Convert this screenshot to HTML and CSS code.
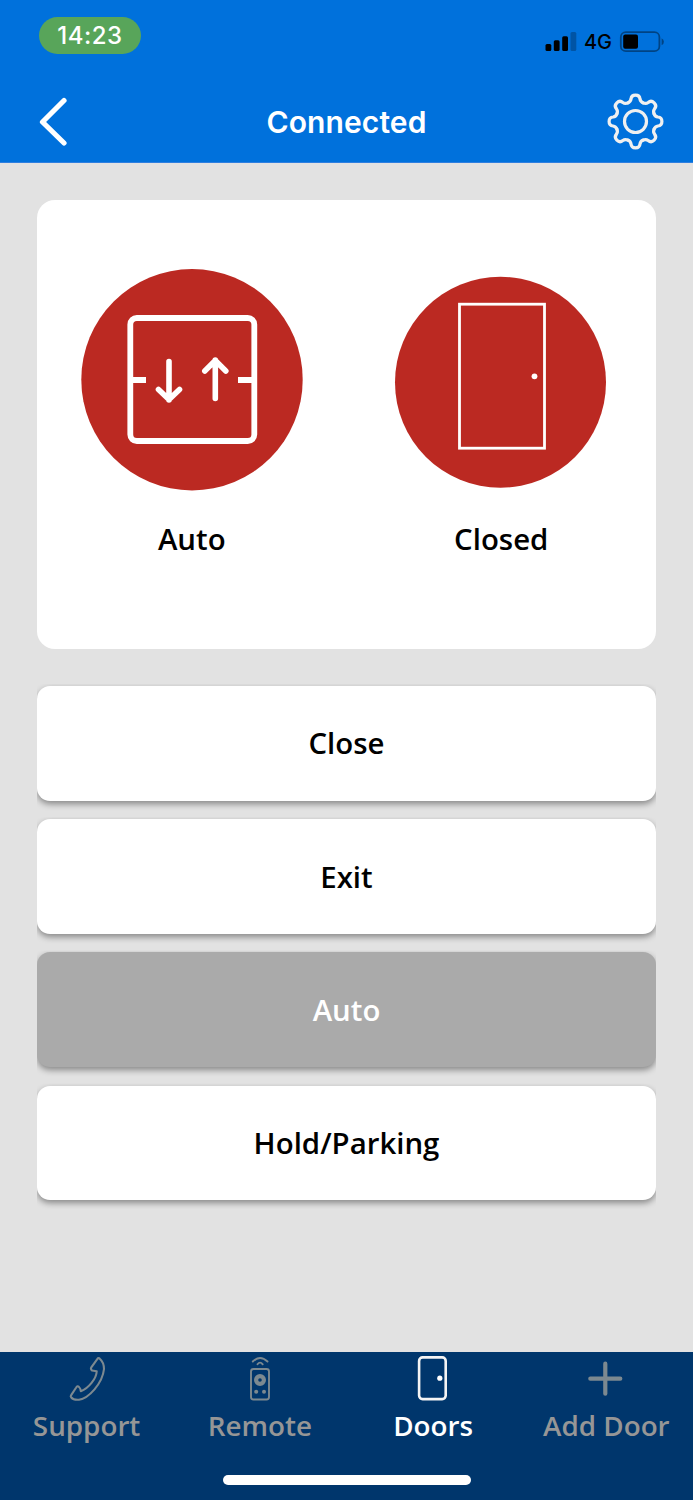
FILE: index.html
```html
<!DOCTYPE html>
<html lang="en">
<head>
  <meta charset="UTF-8" />
  <meta name="viewport" content="width=device-width, initial-scale=1.0" />
  <title>Doors</title>
  <link rel="stylesheet" href="styles.css">
</head>
<body>
  <div class="app">
    <header class="header">
      <div class="status-bar">
        <span class="time">14:23</span>
        <div class="status-icons">
          <svg class="signal" width="32" height="20" viewBox="0 0 32 20">
            <rect x="0.5" y="12" width="5.8" height="7" rx="1.5" />
            <rect x="8.8" y="8.3" width="5.8" height="10.7" rx="1.5" />
            <rect x="17.2" y="4.3" width="5.8" height="14.7" rx="1.5" />
            <rect x="25.5" y="0" width="5.8" height="19" rx="1.5" opacity="0.25" />
          </svg>
          <span class="network">4G</span>
          <svg width="46" height="22" viewBox="-0.6 0 46 22">
            <rect x="1.2" y="1.2" width="38.6" height="19" rx="5" fill="none" stroke="#000" stroke-opacity="0.4" stroke-width="1.8" />
            <rect x="3.6" y="3.5" width="14.8" height="14.3" rx="2" />
            <path d="M42 7.2q2.3 1 2.3 3.5t-2.3 3.5z" opacity="0.4" />
          </svg>
        </div>
      </div>
      <div class="nav-bar">
        <svg class="back" width="30" height="50" viewBox="0 0 30 50">
          <path d="M26 3.5L4.5 25L26 46" fill="none" stroke="#fff" stroke-width="5.2" stroke-linecap="round" stroke-linejoin="round" />
        </svg>
        <h1 class="title">Connected</h1>
        <svg class="gear" width="58" height="58" viewBox="-29.5 -28.5 58 58">
          <defs>
            <path id="tooth" d="M-7.7 -18.6Q-4.9 -19.7 -4.5 -22.4Q-4.2 -26.4 0 -26.4Q4.2 -26.4 4.5 -22.4Q4.9 -19.7 7.7 -18.6" />
          </defs>
          <g fill="none" stroke="#f0f0f0" stroke-width="3.2" stroke-linecap="round">
            <use href="#tooth" />
            <use href="#tooth" transform="rotate(45)" />
            <use href="#tooth" transform="rotate(90)" />
            <use href="#tooth" transform="rotate(135)" />
            <use href="#tooth" transform="rotate(180)" />
            <use href="#tooth" transform="rotate(225)" />
            <use href="#tooth" transform="rotate(270)" />
            <use href="#tooth" transform="rotate(315)" />
            <circle r="11" />
          </g>
        </svg>
      </div>
    </header>

    <main class="content">
      <section class="card">
        <div class="state">
          <svg width="222" height="222" viewBox="0 0 222 222">
            <circle cx="111" cy="110.7" r="110.7" fill="#bb2922" />
            <g fill="none" stroke="#fff" stroke-width="5.8">
              <rect x="49.3" y="49" width="124" height="123" rx="6.5" />
              <path d="M49 111H65M157 111H173" />
              <path d="M88 92.5V131M77.5 120.5L88 130.5L98.5 120.5" stroke-width="5.6" stroke-linecap="round" stroke-linejoin="round" />
              <path d="M134.3 129.5V91M123.8 102L134.3 91.5L144.8 102" stroke-width="5.6" stroke-linecap="round" stroke-linejoin="round" />
            </g>
          </svg>
          <span class="state-label">Auto</span>
        </div>
        <div class="state">
          <svg width="222" height="222" viewBox="0 0 222 222">
            <circle cx="110.5" cy="113.3" r="105.5" fill="#bb2922" />
            <rect x="69.5" y="35.2" width="85" height="144" fill="none" stroke="#fff" stroke-width="2.8" />
            <circle cx="144.5" cy="107.3" r="2.9" fill="#fff" />
          </svg>
          <span class="state-label">Closed</span>
        </div>
      </section>

      <div class="actions">
        <button class="btn">Close</button>
        <button class="btn">Exit</button>
        <button class="btn active">Auto</button>
        <button class="btn">Hold/Parking</button>
      </div>
    </main>

    <footer class="footer">
      <nav class="tabs">
        <a class="tab">
          <svg width="46" height="46" viewBox="-0.5 -0.5 46 46" fill="none" stroke="#7c8990" stroke-width="2.1" stroke-linejoin="round">
            <path d="M33.3 1.8Q34.5 1.3 35.3 2.2Q39.5 6 39.5 12.5C38 27 24 42 14.5 43.2Q9 43.7 6.8 41Q5.8 39.8 6.5 38.8L11.7 31Q13 28.8 14.5 30.5Q16 31.5 16.3 34.7C24 32 32 22 32.2 14.7L27.5 14Q25.8 12.5 26.8 10.8Z" />
          </svg>
          <span>Support</span>
        </a>
        <a class="tab">
          <svg width="46" height="46" viewBox="0 -0.5 46 46" fill="none" stroke="#7c8990" stroke-width="1.9">
            <path d="M15.8 5Q23 -2 30.5 5M20.5 7.8Q23 4.5 25.7 7.8" stroke-linecap="round" />
            <rect x="14" y="12.5" width="18" height="30.5" rx="2.5" />
            <circle cx="23" cy="23.5" r="3.9" stroke-width="4.2" />
            <circle cx="19.2" cy="35.3" r="2" fill="#7c8990" stroke="none" />
            <circle cx="27" cy="35.3" r="2" fill="#7c8990" stroke="none" />
          </svg>
          <span>Remote</span>
        </a>
        <a class="tab selected">
          <svg width="46" height="46" viewBox="0.7 -0.5 46 46">
            <rect x="9.8" y="0.9" width="26.6" height="41.7" rx="3.5" fill="none" stroke="#f4f4f4" stroke-width="2.6" />
            <circle cx="30.5" cy="21.7" r="2.6" fill="#fff" />
          </svg>
          <span>Doors</span>
        </a>
        <a class="tab">
          <svg width="46" height="46" viewBox="0.7 -0.5 46 46">
            <path d="M23 7.2V37.2M8 22.2H38" fill="none" stroke="#7c8990" stroke-width="4.2" stroke-linecap="round" />
          </svg>
          <span>Add Door</span>
        </a>
      </nav>
      <div class="home-indicator"></div>
    </footer>
  </div>
</body>
</html>
```
FILE: styles.css
```css
* {
  box-sizing: border-box;
}

body {
  margin: 0;
  background-color: #e2e2e2;
  font-family: 'Open Sans', 'Noto Sans', sans-serif;
  color: #000;
}

.app {
  display: flex;
  flex-direction: column;
  height: 1500px;
}

.header {
  height: 163px;
  background-color: #0071dc;
  border-bottom: 1px solid #2f7fe0;
}

.status-bar {
  display: flex;
  justify-content: space-between;
  align-items: flex-start;
  height: 80px;
  padding: 17px 28px 0 39px;
}

.time {
  width: 102px;
  height: 37px;
  border-radius: 19px;
  background-color: #58a55a;
  color: #fff;
  font-family: Inter, sans-serif;
  font-size: 24px;
  font-weight: 500;
  line-height: 38px;
  letter-spacing: 0.5px;
  text-align: center;
}

.status-icons {
  display: flex;
  align-items: center;
  height: 22px;
  margin-top: 14px;
}

.network {
  width: 42px;
  font-family: Inter, sans-serif;
  font-size: 20px;
  font-weight: 500;
  text-align: center;
}

.nav-bar {
  display: flex;
  justify-content: space-between;
  align-items: center;
  height: 83px;
  padding: 0 29px 0 38px;
}

.back {
  margin-right: 19px;
}

.title {
  margin: 0;
  color: #fff;
  font-family: Inter, sans-serif;
  font-size: 30px;
  font-weight: 600;
  letter-spacing: 0.1px;
}

.content {
  flex: 1;
  padding: 37px 37px 0;
}

.card {
  display: flex;
  height: 449px;
  padding-top: 69px;
  border-radius: 18px;
  background-color: #fff;
}

.state {
  display: flex;
  flex: 1;
  flex-direction: column;
  align-items: center;
}

.state-label {
  margin-top: 28px;
  font-size: 29.4px;
  font-weight: 600;
  line-height: 40px;
}

.actions {
  display: flex;
  flex-direction: column;
  gap: 18.4px;
  margin-top: 37px;
}

.btn {
  height: 114.8px;
  border: none;
  border-radius: 13px;
  background-color: #fff;
  color: #000;
  box-shadow: 0 3px 6px rgba(0, 0, 0, 0.4);
  clip-path: inset(-2px 0 -12px);
  font-family: inherit;
  font-size: 29.4px;
  font-weight: 600;
}

.btn.active {
  background-color: #aaa;
  color: #fff;
}

.footer {
  height: 148px;
  padding-top: 4px;
  background-color: #00366c;
}

.tabs {
  display: flex;
  height: 119px;
}

.tab {
  display: flex;
  flex: 1;
  flex-direction: column;
  align-items: center;
  color: #969696;
  font-size: 27.8px;
  font-weight: 600;
  line-height: 46px;
}

.tab.selected {
  color: #fff;
}

.home-indicator {
  width: 248px;
  height: 10px;
  margin: 0 auto;
  border-radius: 5px;
  background-color: #fff;
}
```
